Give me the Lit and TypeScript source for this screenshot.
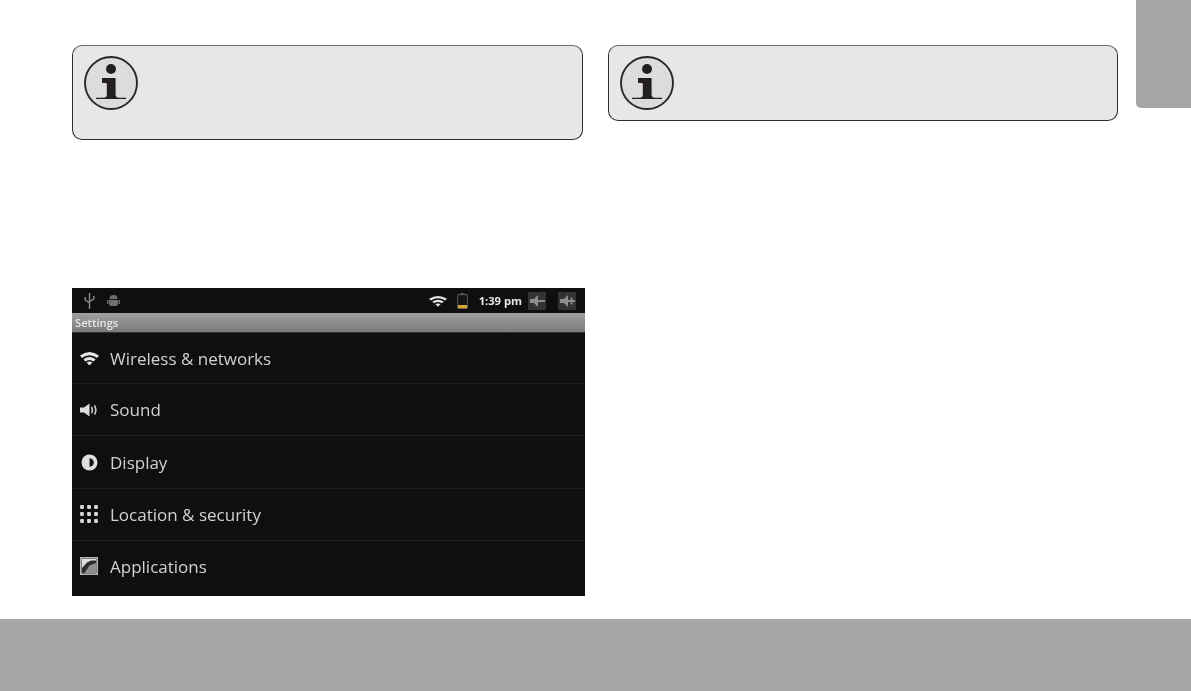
import { LitElement, html, css, svg } from "lit";
import { customElement } from "lit/decorators.js";

const infoIcon = html`<svg class="info" viewBox="0 0 56 56" width="56" height="56">
  <circle cx="28" cy="28" r="26" fill="#dcdcdc" stroke="#2a2627" stroke-width="1.9"/>
  <circle cx="28" cy="14" r="5" fill="#231f20"/>
  <path d="M19 23H32.6V40.5Q32.6 42.4 35.5 42.7H43V44H13V42.7H20.5Q23.8 42.4 23.8 40.5V29Q23.8 28 22.6 28H19Z" fill="#231f20"/>
</svg>`;

const wifi = (w: number, h: number) => html`<svg viewBox="0 0 20 15" width=${w} height=${h} preserveAspectRatio="none">
  <path d="M0 4.6Q10 -2.4 20 4.6L18 7Q10 1.4 2 7Z" fill="#e6e6e6"/>
  <path d="M3.6 8.2Q10 3.8 16.4 8.2L14.4 10.4Q10 7.4 5.6 10.4Z" fill="#e6e6e6"/>
  <path d="M7 11.4Q10 9.6 13 11.4L10 14.6Z" fill="#e6e6e6"/>
</svg>`;

const icons: Record<string, unknown> = {
  wifi: wifi(19, 15),
  sound: html`<svg viewBox="0 0 18 14" width="18" height="14">
    <path d="M0 4.5H4L9.5 0.5V13.5L4 9.5H0Z" fill="#dcdcdc"/>
    <path d="M11.5 4Q13.2 7 11.5 10M14.5 2.5Q17.2 7 14.5 11.5" fill="none" stroke="#cfcfcf" stroke-width="1.6"/>
  </svg>`,
  display: html`<svg viewBox="0 0 17 17" width="17" height="17">
    <circle cx="8.5" cy="8.5" r="8" fill="#e0e0e0"/>
    <path d="M8.5 4.2A4.3 4.3 0 0 1 8.5 12.8Z" fill="#161616"/>
  </svg>`,
  grid: html`<svg viewBox="0 0 18 18" width="18" height="18" fill="#d8d8d8">
    ${[2, 9, 16].map((y) => [2, 9, 16].map((x) => svg`<rect x=${x - 1.9} y=${y - 1.9} width="3.8" height="3.8" rx="0.8"/>`))}
  </svg>`,
  apps: html`<svg viewBox="0 0 18 18" width="18" height="18">
    <rect x="0.8" y="0.8" width="16.4" height="16.4" fill="#2c2c2c" stroke="#b4b4b4" stroke-width="1.6"/>
    <path d="M2 11L7 5.5L11 3.5H16V2H2Z" fill="#e0e0e0"/>
    <path d="M4.5 16L9.5 8.5L16 6V16Z" fill="#8e8e8e"/>
  </svg>`,
};

const rows = [
  { icon: "wifi", label: "Wireless & networks" },
  { icon: "sound", label: "Sound" },
  { icon: "display", label: "Display" },
  { icon: "grid", label: "Location & security" },
  { icon: "apps", label: "Applications" },
];

@customElement("app-root")
export class AppRoot extends LitElement {
  static styles = css`
    :host {
      display: flex;
      flex-direction: column;
      width: 1191px;
      height: 691px;
      background: #fff;
      position: relative;
      overflow: hidden;
      font-family: "Open Sans", "Noto Sans", sans-serif;
    }
    .page {
      flex: 1;
      display: grid;
      grid-template-columns: 513px 510px;
      column-gap: 23px;
      padding: 45px 0 0 72px;
      box-sizing: border-box;
      align-content: start;
    }
    .col { display: flex; flex-direction: column; }
    .note {
      box-sizing: border-box;
      width: 511px;
      background: #e7e7e7;
      border: 1px solid #2f2c2d;
      border-top-color: #6f6d6e;
      border-radius: 10px;
      padding: 9px 0 0 10px;
    }
    .note.tall { height: 95px; }
    .note.short { height: 76px; width: 510px; }
    .info { display: block; }
    .tab {
      position: absolute;
      left: 1136px;
      top: 0;
      width: 55px;
      height: 108px;
      background: #a7a5a6;
      border-bottom-left-radius: 5px;
    }
    .shot {
      margin-top: 148px;
      width: 513px;
      height: 308px;
      background: #0f0f0f;
      display: flex;
      flex-direction: column;
      overflow: hidden;
    }
    .status {
      height: 25px;
      flex: none;
      display: flex;
      align-items: center;
      padding: 0 9px 0 12px;
      filter: blur(0.6px);
    }
    .status .left { display: flex; align-items: center; gap: 12px; flex: 1; }
    .status .right { display: flex; align-items: center; }
    .batt { margin-left: 10px; display: block; }
    .time {
      font: 700 11.2px "Open Sans", sans-serif;
      color: #e8e8e8;
      margin: 0 6px 0 11px;
      white-space: nowrap;
    }
    .mini { display: block; }
    .mini.second { margin-left: 12px; }
    .title {
      height: 20px;
      flex: none;
      box-sizing: border-box;
      background: linear-gradient(#a0a0a0, #8c8c8c 55%, #7a7a7a);
      border-bottom: 1px solid #333;
      color: #e6e6e6;
      font-size: 11.2px;
      font-weight: 600;
      line-height: 19px;
      padding-left: 3px;
      filter: blur(0.5px);
    }
    .list { flex: 1; display: flex; flex-direction: column; }
    .row {
      height: 52.4px;
      flex: none;
      box-sizing: border-box;
      border-bottom: 1px solid #1f1f1f;
      display: flex;
      align-items: center;
      filter: blur(0.55px);
    }
    .row:first-child { height: 51px; }
    .row:last-child { border-bottom: none; flex: 1; height: auto; padding-bottom: 5px; }
    .ico {
      width: 34px;
      margin-right: 4px;
      flex: none;
      display: flex;
      justify-content: center;
    }
    .label { color: #d2d2d2; font-size: 17px; white-space: nowrap; }
    .footer { height: 72px; flex: none; background: #a7a5a6; }
  `;

  render() {
    return html`
      <div class="page">
        <div class="col">
          <div class="note tall">${infoIcon}</div>
          <div class="shot">
            <div class="status">
              <div class="left">
                <svg viewBox="0 0 11 16" width="11" height="16">
                  <path d="M5.5 0V16M1.2 4V7L5.5 10M9.8 3V6L5.5 8.5" fill="none" stroke="#8c8c8c" stroke-width="1.4"/>
                </svg>
                <svg viewBox="0 0 13 13" width="13" height="13">
                  <path d="M2.5 5Q2.5 1 6.5 1Q10.5 1 10.5 5ZM2 6H11V10Q11 12 9 12H4Q2 12 2 10ZM0 6H1.4V10H0ZM11.6 6H13V10H11.6Z" fill="#6e6e6e"/>
                </svg>
              </div>
              <div class="right">
                ${wifi(18, 12)}
                <svg class="batt" viewBox="0 0 11 16" width="11" height="16">
                  <rect x="0.6" y="1.6" width="9.8" height="13.8" rx="1" fill="#141414" stroke="#55534d" stroke-width="1.1"/>
                  <rect x="3.5" y="0" width="4" height="1.6" fill="#55534d"/>
                  <rect x="1" y="12" width="9" height="3.2" fill="#d9a63a"/>
                </svg>
                <span class="time">1:39 pm</span>
                <svg class="mini" viewBox="0 0 18 18" width="18" height="18">
                  <rect width="18" height="18" fill="#333"/>
                  <path d="M2 7H6L10 3V15L6 11H2ZM10 8H17V10H10Z" fill="#8e8e8e"/>
                </svg>
                <svg class="mini second" viewBox="0 0 18 18" width="18" height="18">
                  <rect width="18" height="18" fill="#333"/>
                  <path d="M2 7H6L10 3V15L6 11H2ZM10 8H17V10H10ZM12.6 5.5H14.4V12.5H12.6Z" fill="#8e8e8e"/>
                </svg>
              </div>
            </div>
            <div class="title">Settings</div>
            <div class="list">
              ${rows.map(
                (r) => html`<div class="row">
                  <span class="ico">${icons[r.icon]}</span>
                  <span class="label">${r.label}</span>
                </div>`
              )}
            </div>
          </div>
        </div>
        <div class="col">
          <div class="note short">${infoIcon}</div>
        </div>
      </div>
      <div class="tab"></div>
      <div class="footer"></div>
    `;
  }
}
